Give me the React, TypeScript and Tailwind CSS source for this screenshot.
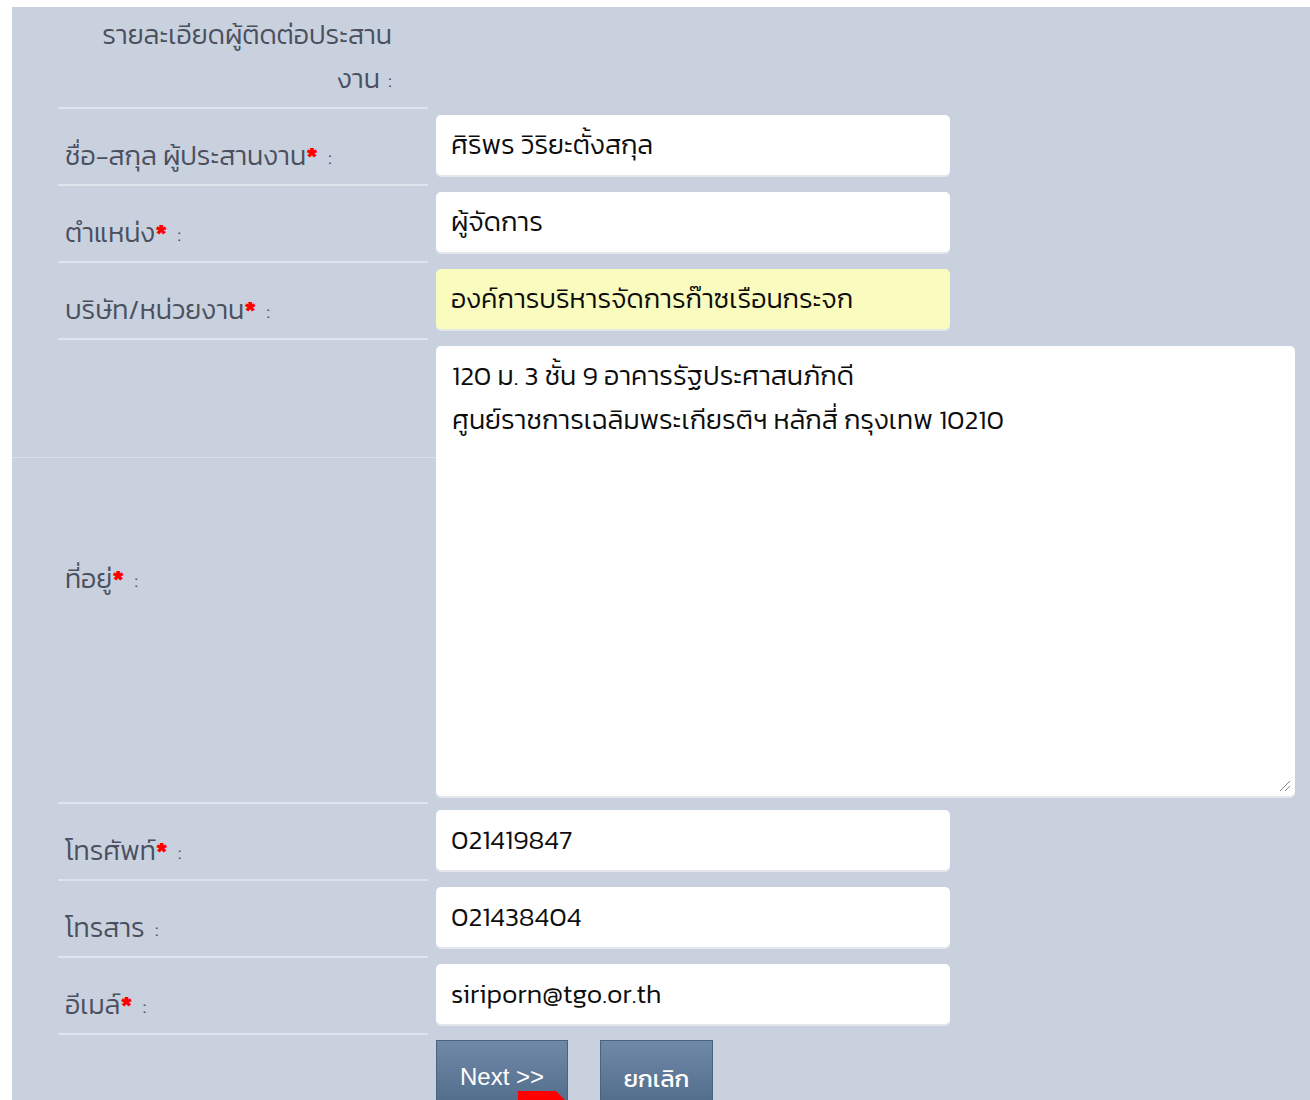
import React from "react";

const baseFont = {
  fontFamily: '"Kanit", "Prompt", "Noto Sans Thai", "Noto Sans", "DejaVu Sans", sans-serif',
};

function Req() {
  return <span className="font-bold text-[#ff0000]">*</span>;
}

function Label({ text, req }: { text: string; req?: boolean }) {
  return (
    <span className="text-[27px] font-light leading-[32px] text-[#4a505e]">
      {text}
      {req && <Req />}
      <span className="ml-[10px] text-[23px]">:</span>
    </span>
  );
}

function InputRow({
  text,
  value,
  req,
  yellow,
}: {
  text: string;
  value: string;
  req?: boolean;
  yellow?: boolean;
}) {
  return (
    <div className="flex">
      <div className="ml-[46px] flex h-[77px] w-[370px] items-end border-b-2 border-[#dfe4ec] pb-[11px] pl-[7px]">
        <Label text={text} req={req} />
      </div>
      <div className="ml-[8px] pt-[6px]">
        <div
          className={`flex h-[60px] w-[514px] items-center rounded-[5px] pl-[15px] text-[27px] font-light text-[#0d0d0d] shadow-[0_2px_0_#e3e6ea] ${
            yellow ? "bg-[#fafcbf]" : "bg-white"
          }`}
        >
          {value}
        </div>
      </div>
    </div>
  );
}

export default function App() {
  return (
    <div className="min-h-[1100px] bg-white pl-[12px] pt-[7px]" style={baseFont}>
      <div className="relative bg-[#c9d1de] pb-[40px]">
        {/* heading row */}
        <div className="flex">
          <div className="ml-[46px] h-[102px] w-[370px] border-b-2 border-[#dfe4ec] pr-[36px] pt-[6px] text-right text-[27px] font-light leading-[44px] text-[#4a505e]">
            รายละเอียดผู้ติดต่อประสาน
            <br />
            งาน <span className="ml-[2px] text-[23px]">:</span>
          </div>
        </div>

        <InputRow text="ชื่อ-สกุล ผู้ประสานงาน" value="ศิริพร วิริยะตั้งสกุล" req />
        <InputRow text="ตำแหน่ง" value="ผู้จัดการ" req />
        <InputRow text="บริษัท/หน่วยงาน" value="องค์การบริหารจัดการก๊าซเรือนกระจก" req yellow />

        {/* address row */}
        <div className="relative flex">
          <div className="absolute left-0 top-[117px] h-px w-[424px] bg-[#dbe0e8]" />
          <div className="ml-[46px] flex h-[464px] w-[370px] items-center border-b-2 border-[#dfe4ec] pl-[7px] pt-[16px]">
            <Label text="ที่อยู่" req />
          </div>
          <div className="ml-[8px] pt-[6px]">
            <div className="relative h-[450px] w-[859px] rounded-[5px] bg-white px-[16px] pt-[8px] text-[27px] font-light leading-[44px] text-[#0d0d0d] shadow-[0_2px_0_#e3e6ea]">
              <div>120 ม. 3 ชั้น 9 อาคารรัฐประศาสนภักดี</div>
              <div>ศูนย์ราชการเฉลิมพระเกียรติฯ หลักสี่ กรุงเทพ 10210</div>
              <svg
                className="absolute bottom-[4px] right-[4px]"
                width="12"
                height="12"
                viewBox="0 0 12 12"
              >
                <line x1="1" y1="11" x2="11" y2="1" stroke="#8a8a8a" strokeWidth="1" />
                <line x1="6" y1="11" x2="11" y2="6" stroke="#8a8a8a" strokeWidth="1" />
              </svg>
            </div>
          </div>
        </div>

        <InputRow text="โทรศัพท์" value="021419847" req />
        <InputRow text="โทรสาร" value="021438404" />
        <InputRow text="อีเมล์" value="siriporn@tgo.or.th" req />

        {/* actions */}
        <div className="flex gap-[32px] pl-[424px] pt-[5px]">
          <div className="relative">
            <button
              className="h-[72px] w-[132px] border border-[#4a6480] bg-[linear-gradient(#7189a8,#4e6988)] pt-[2px] text-[24px] text-white"
              style={{ fontFamily: '"Liberation Sans", Arial, sans-serif' }}
            >
              Next &gt;&gt;
            </button>
            <svg
              className="absolute left-[82px] top-[51px]"
              width="48"
              height="12"
              viewBox="0 0 48 12"
            >
              <polygon points="0,0 38,0 48,10 48,12 0,12" fill="#ff0000" />
            </svg>
          </div>
          <button className="h-[72px] w-[113px] border border-[#4a6480] bg-[linear-gradient(#7189a8,#4e6988)] pt-[6px] text-[24px] text-white">
            ยกเลิก
          </button>
        </div>
      </div>
    </div>
  );
}
